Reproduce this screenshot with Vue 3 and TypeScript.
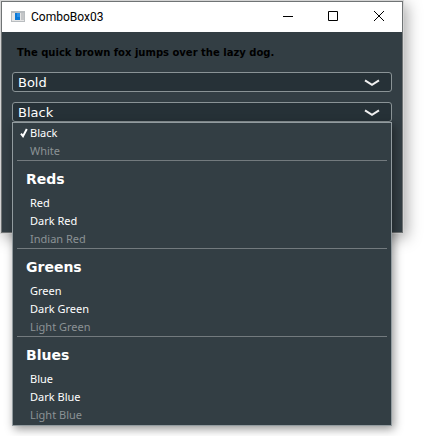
<script setup lang="ts">
import { computed, ref } from 'vue'

interface ColorOption {
  name: string
  disabled?: boolean
}

interface ColorGroup {
  label?: string
  options: ColorOption[]
}

const groups: ColorGroup[] = [
  { options: [{ name: 'Black' }, { name: 'White', disabled: true }] },
  {
    label: 'Reds',
    options: [{ name: 'Red' }, { name: 'Dark Red' }, { name: 'Indian Red', disabled: true }],
  },
  {
    label: 'Greens',
    options: [{ name: 'Green' }, { name: 'Dark Green' }, { name: 'Light Green', disabled: true }],
  },
  {
    label: 'Blues',
    options: [{ name: 'Blue' }, { name: 'Dark Blue' }, { name: 'Light Blue', disabled: true }],
  },
]

const weight = ref('Bold')
const color = ref('Black')
const open = ref(true)

const cssColor = computed(() => color.value.replace(' ', '').toLowerCase())

function choose(option: ColorOption) {
  color.value = option.name
  open.value = false
}
</script>

<template>
  <div class="desktop">
    <main class="window">
      <header class="titlebar">
        <svg class="app-icon" width="14" height="12" viewBox="0 0 14 12" aria-hidden="true">
          <rect width="14" height="11" fill="#b9bdc0" />
          <rect x="1" y="2" width="12" height="8" fill="#e6e6e6" />
          <rect x="4" y="2" width="5" height="7" fill="#0a78d6" />
          <rect x="6" y="2" width="3" height="4" fill="#2a90e8" />
          <rect x="10" y="2" width="3" height="7" fill="#c4c6c8" />
        </svg>
        <h1 class="title">ComboBox03</h1>
        <button class="caption-button" type="button" aria-label="Minimize">
          <svg width="10" height="10" viewBox="0 0 10 10"><path d="M1 5.5H11" /></svg>
        </button>
        <button class="caption-button" type="button" aria-label="Maximize">
          <svg width="10" height="10" viewBox="0 0 10 10"><path d="M.5 .5H9.5V9.5H.5Z" /></svg>
        </button>
        <button class="caption-button" type="button" aria-label="Close">
          <svg width="10" height="10" viewBox="0 0 10 10"><path d="M0 0L10 10M10 0L0 10" /></svg>
        </button>
      </header>

      <section class="content">
        <p class="sample" :class="{ bold: weight === 'Bold' }" :style="{ color: cssColor }">
          The quick brown fox jumps over the lazy dog.
        </p>

        <div class="combo">
          <select v-model="weight" class="select" aria-label="Font weight">
            <option>Regular</option>
            <option>Bold</option>
          </select>
          <svg class="chevron" width="16" height="8" viewBox="0 0 16 8" aria-hidden="true">
            <path d="M1 1.3L8 5.8L15 1.3" />
          </svg>
        </div>

        <div class="combo">
          <select
            v-model="color"
            class="select"
            aria-label="Text color"
            @mousedown.prevent="open = !open"
          >
            <template v-for="group in groups">
              <option v-for="option in group.options" :key="option.name" :disabled="option.disabled">
                {{ option.name }}
              </option>
            </template>
          </select>
          <svg class="chevron" width="16" height="8" viewBox="0 0 16 8" aria-hidden="true">
            <path d="M1 1.3L8 5.8L15 1.3" />
          </svg>

          <div v-if="open" class="popup" role="listbox" aria-label="Text color">
            <div v-for="(group, index) in groups" :key="index" class="group" role="group">
              <h2 v-if="group.label" class="group-label">{{ group.label }}</h2>
              <button
                v-for="option in group.options"
                :key="option.name"
                class="option"
                type="button"
                role="option"
                :aria-selected="option.name === color"
                :disabled="option.disabled"
                @click="choose(option)"
              >
                <span class="mark">
                  <svg v-if="option.name === color" width="8" height="10" viewBox="0 0 8 10">
                    <path d="M1 5.6L3 8.2L6.8 1" />
                  </svg>
                </span>
                {{ option.name }}
              </button>
            </div>
          </div>
        </div>
      </section>
    </main>
  </div>
</template>

<style>
body {
  background: #fff;
}
</style>

<style scoped>
.desktop {
  box-sizing: border-box;
  min-height: 100vh;
  padding: 1px 21px 0 1px;
}

.window {
  border: 1px solid #707475;
  background: #333e44;
  box-shadow: 0 0 0 1px #d4d4d4, 3px 4px 14px 1px rgba(0, 0, 0, 0.34);
  font-family: "DejaVu Sans", Verdana, sans-serif;
}

.titlebar {
  display: flex;
  align-items: center;
  height: 30px;
  padding-left: 9px;
  background: #fff;
}

.title {
  flex: 1;
  margin: 0 0 0 6px;
  color: #000;
  font: 400 12px/16px Roboto, "Segoe UI", sans-serif;
}

.caption-button {
  display: flex;
  align-items: center;
  justify-content: center;
  width: 46px;
  height: 30px;
  padding: 0 0 2px;
  border: 0;
  background: transparent;
}

.caption-button svg {
  overflow: visible;
}

.caption-button path {
  fill: none;
  stroke: #000;
  stroke-width: 1;
}

.content {
  display: flex;
  flex-direction: column;
  gap: 10px;
  padding: 10px 10px 110px;
}

.sample {
  margin: 0;
  padding: 1px 5px 0;
  font-size: 10px;
  line-height: 19px;
}

.bold {
  font-weight: 700;
}

.combo {
  position: relative;
}

.select {
  display: block;
  box-sizing: border-box;
  width: 100%;
  height: 20px;
  padding: 1px 32px 0 5px;
  appearance: none;
  border: 1px solid #8a9396;
  border-radius: 3px;
  outline: 0;
  background: #263137;
  color: #fff;
  font: 13px/18px "DejaVu Sans", Verdana, sans-serif;
}

.chevron {
  position: absolute;
  top: 7px;
  right: 12px;
  pointer-events: none;
}

.chevron path {
  fill: none;
  stroke: #f0f0f0;
  stroke-width: 2;
}

.popup {
  position: absolute;
  top: 100%;
  right: 0;
  left: 0;
  padding: 1px 4px;
  border: 1px solid #929b9f;
  background: #333e44;
  box-shadow: 2px 3px 9px rgba(0, 0, 0, 0.42);
}

.group + .group {
  border-top: 1px solid #737a7e;
}

.group-label {
  margin: 0;
  padding: 3px 9px 0;
  color: #fff;
  font-size: 14px;
  line-height: 30px;
}

.option {
  display: flex;
  align-items: center;
  width: 100%;
  height: 18px;
  padding: 0 3px;
  border: 0;
  background: transparent;
  color: #fff;
  font: 11px/18px "Noto Sans", Tahoma, sans-serif;
  text-align: left;
}

.option:disabled {
  color: #8b9295;
}

.mark {
  display: flex;
  width: 10px;
}

.mark path {
  fill: none;
  stroke: #fff;
  stroke-width: 2;
}
</style>
